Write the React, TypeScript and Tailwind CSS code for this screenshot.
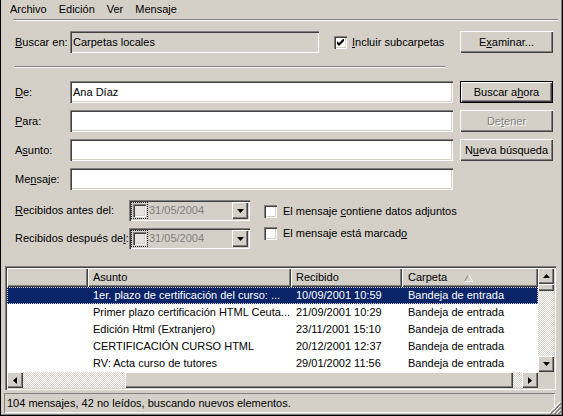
import React from 'react'

// Win2000-style bevels
const sunken = 'shadow-[inset_1px_1px_0_#808080,inset_2px_2px_0_#404040,inset_-1px_-1px_0_#ffffff,inset_-2px_-2px_0_#d4d0c8]'
const raised = 'shadow-[inset_1px_1px_0_#ffffff,inset_-1px_-1px_0_#404040,inset_-2px_-2px_0_#808080]'
const thin = 'shadow-[inset_1px_1px_0_#808080,inset_-1px_-1px_0_#ffffff]'
const dither = 'bg-[repeating-conic-gradient(#ffffff_0_25%,#d4d0c8_0_50%)] bg-[length:2px_2px]'

const Check = ({ checked = false, bg = 'bg-white' }: { checked?: boolean; bg?: string }) => (
  <div className={`flex h-[13px] w-[13px] shrink-0 items-center justify-center ${bg} ${sunken}`}>
    {checked && (
      <svg width="7" height="7" viewBox="0 0 7 7">
        <path d="M0 2v3l2 2l5-5v-3l-5 5z" fill="#000" />
      </svg>
    )}
  </div>
)

const Button = ({ children, def = false, disabled = false }: { children: React.ReactNode; def?: boolean; disabled?: boolean }) => (
  <div className={`h-[22px] w-[93px] ${def ? 'border border-black' : ''}`}>
    <div
      className={`flex h-full w-full items-center justify-center ${raised} ${
        disabled ? 'text-[#808080] [text-shadow:1px_1px_0_#ffffff]' : ''
      }`}
    >
      {children}
    </div>
  </div>
)

const Arrow = ({ dir }: { dir: 'up' | 'down' | 'left' | 'right' }) => {
  const d = {
    up: 'M0 4h7l-3.5-4z',
    down: 'M0 0h7l-3.5 4z',
    left: 'M4 0v7l-4-3.5z',
    right: 'M0 0v7l4-3.5z',
  }[dir]
  const vertical = dir === 'up' || dir === 'down'
  return (
    <svg width={vertical ? 7 : 4} height={vertical ? 4 : 7} viewBox={vertical ? '0 0 7 4' : '0 0 4 7'}>
      <path d={d} fill="#000" />
    </svg>
  )
}

const Picker = () => (
  <div className={`flex h-[21px] w-[121px] items-center bg-[#d4d0c8] pl-[2px] ${sunken}`}>
    <div className="flex h-[17px] w-[17px] items-center justify-center outline-1 outline-dotted outline-black -outline-offset-1">
      <Check bg="bg-[#e6e3de]" />
    </div>
    <span className="ml-[1px] text-[#808080]">31/05/2004</span>
    <div className={`ml-auto mr-[2px] flex h-[17px] w-[16px] items-center justify-center bg-[#d4d0c8] ${raised}`}>
      <Arrow dir="down" />
    </div>
  </div>
)

const rows = [
  ['1er. plazo de certificación del curso: ...', '10/09/2001 10:59', 'Bandeja de entrada'],
  ['Primer plazo certificación HTML Ceuta...', '21/09/2001 10:29', 'Bandeja de entrada'],
  ['Edición Html (Extranjero)', '23/11/2001 15:10', 'Bandeja de entrada'],
  ['CERTIFICACIÓN CURSO HTML', '20/12/2001 12:37', 'Bandeja de entrada'],
  ['RV: Acta curso de tutores', '29/01/2002 11:56', 'Bandeja de entrada'],
]

const fields = [
  { label: <><u>D</u>e:</>, value: 'Ana Díaz' },
  { label: <><u>P</u>ara:</>, value: '' },
  { label: <>A<u>s</u>unto:</>, value: '' },
  { label: <>Me<u>n</u>saje:</>, value: '' },
]

export default function App() {
  return (
    <div className="relative h-[416px] w-[563px] overflow-hidden bg-[#d4d0c8] font-['Liberation_Sans',Arial,sans-serif] text-[11px] leading-none text-black shadow-[inset_1px_0_0_#000000,inset_-1px_-1px_0_#000000,inset_-2px_-2px_0_#808080]">
      {/* menu bar */}
      <div className="flex h-[19px] items-center pl-[4px]">
        {['Archivo', 'Edición', 'Ver', 'Mensaje'].map((m) => (
          <span key={m} className="px-[6px]">{m}</span>
        ))}
      </div>
      <div className="ml-[13px] mr-[5px] h-[2px] border-t border-b border-t-[#808080] border-b-white" />

      {/* search location */}
      <div className="mt-[10px] flex h-[22px] items-center pl-[15px] pr-[10px]">
        <span className="w-[55px]"><u>B</u>uscar en:</span>
        <div className={`flex h-[22px] w-[249px] items-center pl-[3px] ${sunken}`}>Carpetas locales</div>
        <div className="ml-[15px] flex items-center">
          <Check checked />
          <span className="ml-[5px]"><u>I</u>ncluir subcarpetas</span>
        </div>
        <div className="ml-auto">
          <Button>E<u>x</u>aminar...</Button>
        </div>
      </div>
      <div className="ml-[15px] mt-[13px] h-[2px] w-[430px] border-t border-b border-t-[#808080] border-b-white" />

      {/* criteria */}
      <div className="mt-[13px] flex pl-[15px]">
        <div className="flex flex-col gap-[7px]">
          {fields.map((f, i) => (
            <div key={i} className="flex h-[22px] items-center">
              <span className="w-[55px]">{f.label}</span>
              <div className={`flex h-[22px] w-[383px] items-center bg-white pl-[3px] ${sunken}`}>{f.value}</div>
            </div>
          ))}
        </div>
        <div className="ml-[7px] flex flex-col gap-[7px]">
          <Button def>Buscar a<u>h</u>ora</Button>
          <Button disabled>De<u>t</u>ener</Button>
          <Button>N<u>u</u>eva búsqueda</Button>
        </div>
      </div>

      {/* dates */}
      <div className="mt-[10px] flex pl-[15px]">
        <div className="flex flex-col gap-[7px]">
          <div className="flex items-center">
            <span className="w-[114px]"><u>R</u>ecibidos antes del:</span>
            <Picker />
          </div>
          <div className="flex items-center">
            <span className="w-[114px]">Recibidos después de<u>l</u>:</span>
            <Picker />
          </div>
        </div>
        <div className="ml-[14px] mt-[5px] flex flex-col gap-[9px]">
          <div className="flex items-center">
            <Check />
            <span className="ml-[6px]">El mensaje <u>c</u>ontiene datos adjuntos</span>
          </div>
          <div className="flex items-center">
            <Check />
            <span className="ml-[6px]">El mensaje está marcad<u>o</u></span>
          </div>
        </div>
      </div>

      {/* results list */}
      <div className={`ml-[5px] mt-[17px] h-[124px] w-[551px] bg-white p-[2px] ${sunken}`}>
        <div className="flex h-[104px]">
          <div className="w-[531px]">
            <div className="flex h-[19px] bg-[#d4d0c8]">
              <div className={`w-[81px] ${raised}`} />
              <div className={`flex w-[203px] items-center pl-[5px] ${raised}`}>Asunto</div>
              <div className={`flex w-[111px] items-center pl-[5px] ${raised}`}>Recibido</div>
              <div className={`flex w-[136px] items-center pl-[6px] ${raised}`}>
                Carpeta
                <svg className="ml-[17px]" width="9" height="8" viewBox="0 0 9 8">
                  <path d="M4.5 0.5L0.5 7.5" stroke="#808080" />
                  <path d="M4.5 0.5L8.5 7.5M0.5 7.5H8.5" stroke="#ffffff" />
                </svg>
              </div>
            </div>
            <div className="h-[85px] overflow-hidden">
              {rows.map((r, i) => (
                <div
                  key={i}
                  className={`flex h-[17px] whitespace-nowrap leading-[17px] ${
                    i === 0 ? 'bg-[#0a246a] text-white outline-1 outline-dotted outline-[#d4d0c8] -outline-offset-1' : ''
                  }`}
                >
                  <div className="w-[81px]" />
                  <div className="w-[203px] pl-[5px]">{r[0]}</div>
                  <div className="w-[111px] pl-[5px]">{r[1]}</div>
                  <div className="w-[136px] pl-[6px]">{r[2]}</div>
                </div>
              ))}
            </div>
          </div>
          {/* vertical scrollbar */}
          <div className="flex w-[16px] flex-col">
            <div className={`flex h-[16px] items-center justify-center bg-[#d4d0c8] ${raised}`}>
              <Arrow dir="up" />
            </div>
            <div className={`h-[7px] bg-[#d4d0c8] ${raised}`} />
            <div className={`flex-1 ${dither}`} />
            <div className={`flex h-[16px] items-center justify-center bg-[#d4d0c8] ${raised}`}>
              <Arrow dir="down" />
            </div>
          </div>
        </div>
        {/* horizontal scrollbar */}
        <div className="flex h-[16px]">
          <div className={`flex w-[16px] items-center justify-center bg-[#d4d0c8] ${raised}`}>
            <Arrow dir="left" />
          </div>
          <div className={`w-[102px] ${dither}`} />
          <div className={`w-[388px] bg-[#d4d0c8] ${raised}`} />
          <div className={`w-[9px] ${dither}`} />
          <div className={`flex w-[16px] items-center justify-center bg-[#d4d0c8] ${raised}`}>
            <Arrow dir="right" />
          </div>
          <div className="w-[16px] bg-[#d4d0c8]" />
        </div>
      </div>

      {/* status bar */}
      <div className={`ml-[4px] mt-[3px] flex h-[20px] w-[551px] items-center pl-[3px] ${thin}`}>
        104 mensajes, 42 no leídos, buscando nuevos elementos.
      </div>

      {/* size grip */}
      <svg className="absolute bottom-[2px] right-[2px]" width="12" height="12" viewBox="0 0 12 12">
        <path d="M11 0L0 11M11 4L4 11M11 8L8 11" stroke="#ffffff" />
        <path d="M12 1L1 12M12 5L5 12M12 9L9 12" stroke="#808080" />
        <path d="M12 2L2 12M12 6L6 12M12 10L10 12" stroke="#808080" />
      </svg>
    </div>
  )
}
